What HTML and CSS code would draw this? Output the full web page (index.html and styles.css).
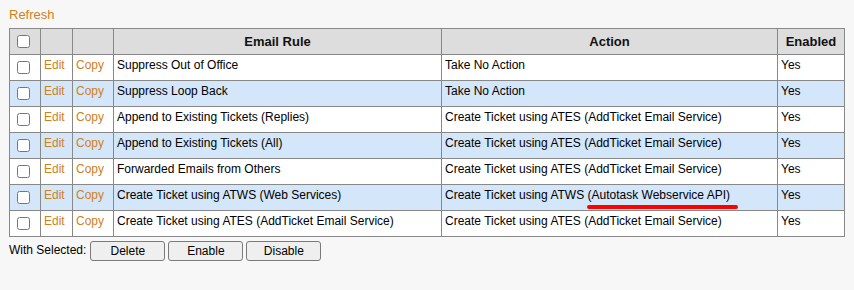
FILE: index.html
```html
<!DOCTYPE html>
<html lang="en">
<head>
  <meta charset="UTF-8">
  <title>Email Rules</title>
  <link rel="stylesheet" href="styles.css">
</head>
<body>
  <a class="link refresh" href="#">Refresh</a>

  <table class="rules">
    <colgroup>
      <col class="c-check">
      <col class="c-edit">
      <col class="c-copy">
      <col class="c-rule">
      <col class="c-action">
      <col class="c-enabled">
    </colgroup>
    <thead>
      <tr>
        <th class="check"><input type="checkbox"></th>
        <th></th>
        <th></th>
        <th>Email Rule</th>
        <th>Action</th>
        <th>Enabled</th>
      </tr>
    </thead>
    <tbody>
      <tr>
        <td class="check"><input type="checkbox"></td>
        <td><a class="link" href="#">Edit</a></td>
        <td><a class="link" href="#">Copy</a></td>
        <td>Suppress Out of Office</td>
        <td>Take No Action</td>
        <td>Yes</td>
      </tr>
      <tr class="alt">
        <td class="check"><input type="checkbox"></td>
        <td><a class="link" href="#">Edit</a></td>
        <td><a class="link" href="#">Copy</a></td>
        <td>Suppress Loop Back</td>
        <td>Take No Action</td>
        <td>Yes</td>
      </tr>
      <tr>
        <td class="check"><input type="checkbox"></td>
        <td><a class="link" href="#">Edit</a></td>
        <td><a class="link" href="#">Copy</a></td>
        <td>Append to Existing Tickets (Replies)</td>
        <td>Create Ticket using ATES (AddTicket Email Service)</td>
        <td>Yes</td>
      </tr>
      <tr class="alt">
        <td class="check"><input type="checkbox"></td>
        <td><a class="link" href="#">Edit</a></td>
        <td><a class="link" href="#">Copy</a></td>
        <td>Append to Existing Tickets (All)</td>
        <td>Create Ticket using ATES (AddTicket Email Service)</td>
        <td>Yes</td>
      </tr>
      <tr>
        <td class="check"><input type="checkbox"></td>
        <td><a class="link" href="#">Edit</a></td>
        <td><a class="link" href="#">Copy</a></td>
        <td>Forwarded Emails from Others</td>
        <td>Create Ticket using ATES (AddTicket Email Service)</td>
        <td>Yes</td>
      </tr>
      <tr class="alt">
        <td class="check"><input type="checkbox"></td>
        <td><a class="link" href="#">Edit</a></td>
        <td><a class="link" href="#">Copy</a></td>
        <td>Create Ticket using ATWS (Web Services)</td>
        <td>Create Ticket using ATWS <span class="marked">(Autotask Webservice API)</span></td>
        <td>Yes</td>
      </tr>
      <tr>
        <td class="check"><input type="checkbox"></td>
        <td><a class="link" href="#">Edit</a></td>
        <td><a class="link" href="#">Copy</a></td>
        <td>Create Ticket using ATES (AddTicket Email Service)</td>
        <td>Create Ticket using ATES (AddTicket Email Service)</td>
        <td>Yes</td>
      </tr>
    </tbody>
  </table>

  <div class="bulk">
    <span class="bulk-label">With Selected:</span>
    <button class="btn">Delete</button>
    <button class="btn">Enable</button>
    <button class="btn">Disable</button>
  </div>
</body>
</html>
```

FILE: styles.css
```css
body {
  font-family: "Liberation Sans", Arial, sans-serif;
  font-size: 12px;
  color: #000;
  background: #f7f7f7;
  margin: 7px 9px;
}
.link {
  color: #d2801c;
  text-decoration: none;
}
.refresh {
  display: block;
  font-size: 13px;
  line-height: 15px;
  margin-bottom: 6px;
}
.rules {
  width: 835px;
  table-layout: fixed;
  border-collapse: collapse;
  background: #fff;
}
.c-check { width: 31px; }
.c-edit { width: 32px; }
.c-copy { width: 41px; }
.c-rule { width: 328px; }
.c-action { width: 336px; }
.c-enabled { width: 67px; }
.rules th,
.rules td {
  border: 1px solid #888;
  padding: 3px;
  text-align: left;
  vertical-align: top;
  white-space: nowrap;
}
.rules th {
  background: #dddddd;
  font-size: 13px;
  font-weight: bold;
  text-align: center;
  vertical-align: middle;
  color: #111;
}
.rules .check {
  text-align: left;
  vertical-align: middle;
}
.rules input[type="checkbox"] {
  display: block;
  width: 13px;
  height: 13px;
  margin: 3px 3px 3px 4px;
}
.rules tr.alt td {
  background: #d4e6f9;
}
.marked {
  position: relative;
}
.marked::after {
  content: "";
  position: absolute;
  left: -1px;
  right: -8px;
  bottom: -7px;
  height: 4px;
  border-radius: 2px;
  background: #ff0000;
}
.bulk {
  margin-top: 4px;
  display: flex;
  align-items: center;
  gap: 3px;
}
.bulk-label {
  margin-right: 1px;
  margin-top: -3px;
}
.btn {
  width: 75px;
  height: 20px;
  padding: 0;
  font-family: "Liberation Sans", Arial, sans-serif;
  font-size: 12px;
  color: #000;
  background: #efefef;
  border: 1px solid #7a7a7a;
  border-radius: 3px;
}
```
